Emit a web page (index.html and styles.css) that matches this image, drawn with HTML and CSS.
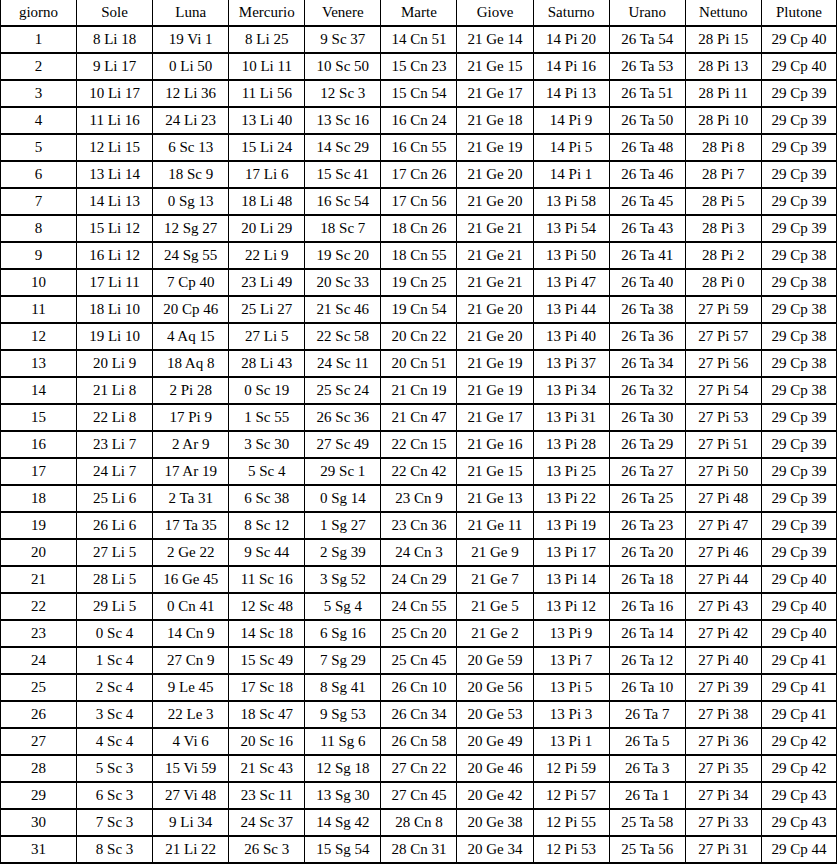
FILE: index.html
```html
<!DOCTYPE html>
<html lang="it">
<head>
<meta charset="utf-8">
<title>Effemeridi</title>
<link rel="stylesheet" href="styles.css">
</head>
<body>
<table class="eph">
<tr><td>giorno</td><td>Sole</td><td>Luna</td><td>Mercurio</td><td>Venere</td><td>Marte</td><td>Giove</td><td>Saturno</td><td>Urano</td><td>Nettuno</td><td>Plutone</td></tr>
<tr><td>1</td><td>8 Li 18</td><td>19 Vi 1</td><td>8 Li 25</td><td>9 Sc 37</td><td>14 Cn 51</td><td>21 Ge 14</td><td>14 Pi 20</td><td>26 Ta 54</td><td>28 Pi 15</td><td>29 Cp 40</td></tr>
<tr><td>2</td><td>9 Li 17</td><td>0 Li 50</td><td>10 Li 11</td><td>10 Sc 50</td><td>15 Cn 23</td><td>21 Ge 15</td><td>14 Pi 16</td><td>26 Ta 53</td><td>28 Pi 13</td><td>29 Cp 40</td></tr>
<tr><td>3</td><td>10 Li 17</td><td>12 Li 36</td><td>11 Li 56</td><td>12 Sc 3</td><td>15 Cn 54</td><td>21 Ge 17</td><td>14 Pi 13</td><td>26 Ta 51</td><td>28 Pi 11</td><td>29 Cp 39</td></tr>
<tr><td>4</td><td>11 Li 16</td><td>24 Li 23</td><td>13 Li 40</td><td>13 Sc 16</td><td>16 Cn 24</td><td>21 Ge 18</td><td>14 Pi 9</td><td>26 Ta 50</td><td>28 Pi 10</td><td>29 Cp 39</td></tr>
<tr><td>5</td><td>12 Li 15</td><td>6 Sc 13</td><td>15 Li 24</td><td>14 Sc 29</td><td>16 Cn 55</td><td>21 Ge 19</td><td>14 Pi 5</td><td>26 Ta 48</td><td>28 Pi 8</td><td>29 Cp 39</td></tr>
<tr><td>6</td><td>13 Li 14</td><td>18 Sc 9</td><td>17 Li 6</td><td>15 Sc 41</td><td>17 Cn 26</td><td>21 Ge 20</td><td>14 Pi 1</td><td>26 Ta 46</td><td>28 Pi 7</td><td>29 Cp 39</td></tr>
<tr><td>7</td><td>14 Li 13</td><td>0 Sg 13</td><td>18 Li 48</td><td>16 Sc 54</td><td>17 Cn 56</td><td>21 Ge 20</td><td>13 Pi 58</td><td>26 Ta 45</td><td>28 Pi 5</td><td>29 Cp 39</td></tr>
<tr><td>8</td><td>15 Li 12</td><td>12 Sg 27</td><td>20 Li 29</td><td>18 Sc 7</td><td>18 Cn 26</td><td>21 Ge 21</td><td>13 Pi 54</td><td>26 Ta 43</td><td>28 Pi 3</td><td>29 Cp 39</td></tr>
<tr><td>9</td><td>16 Li 12</td><td>24 Sg 55</td><td>22 Li 9</td><td>19 Sc 20</td><td>18 Cn 55</td><td>21 Ge 21</td><td>13 Pi 50</td><td>26 Ta 41</td><td>28 Pi 2</td><td>29 Cp 38</td></tr>
<tr><td>10</td><td>17 Li 11</td><td>7 Cp 40</td><td>23 Li 49</td><td>20 Sc 33</td><td>19 Cn 25</td><td>21 Ge 21</td><td>13 Pi 47</td><td>26 Ta 40</td><td>28 Pi 0</td><td>29 Cp 38</td></tr>
<tr><td>11</td><td>18 Li 10</td><td>20 Cp 46</td><td>25 Li 27</td><td>21 Sc 46</td><td>19 Cn 54</td><td>21 Ge 20</td><td>13 Pi 44</td><td>26 Ta 38</td><td>27 Pi 59</td><td>29 Cp 38</td></tr>
<tr><td>12</td><td>19 Li 10</td><td>4 Aq 15</td><td>27 Li 5</td><td>22 Sc 58</td><td>20 Cn 22</td><td>21 Ge 20</td><td>13 Pi 40</td><td>26 Ta 36</td><td>27 Pi 57</td><td>29 Cp 38</td></tr>
<tr><td>13</td><td>20 Li 9</td><td>18 Aq 8</td><td>28 Li 43</td><td>24 Sc 11</td><td>20 Cn 51</td><td>21 Ge 19</td><td>13 Pi 37</td><td>26 Ta 34</td><td>27 Pi 56</td><td>29 Cp 38</td></tr>
<tr><td>14</td><td>21 Li 8</td><td>2 Pi 28</td><td>0 Sc 19</td><td>25 Sc 24</td><td>21 Cn 19</td><td>21 Ge 19</td><td>13 Pi 34</td><td>26 Ta 32</td><td>27 Pi 54</td><td>29 Cp 38</td></tr>
<tr><td>15</td><td>22 Li 8</td><td>17 Pi 9</td><td>1 Sc 55</td><td>26 Sc 36</td><td>21 Cn 47</td><td>21 Ge 17</td><td>13 Pi 31</td><td>26 Ta 30</td><td>27 Pi 53</td><td>29 Cp 39</td></tr>
<tr><td>16</td><td>23 Li 7</td><td>2 Ar 9</td><td>3 Sc 30</td><td>27 Sc 49</td><td>22 Cn 15</td><td>21 Ge 16</td><td>13 Pi 28</td><td>26 Ta 29</td><td>27 Pi 51</td><td>29 Cp 39</td></tr>
<tr><td>17</td><td>24 Li 7</td><td>17 Ar 19</td><td>5 Sc 4</td><td>29 Sc 1</td><td>22 Cn 42</td><td>21 Ge 15</td><td>13 Pi 25</td><td>26 Ta 27</td><td>27 Pi 50</td><td>29 Cp 39</td></tr>
<tr><td>18</td><td>25 Li 6</td><td>2 Ta 31</td><td>6 Sc 38</td><td>0 Sg 14</td><td>23 Cn 9</td><td>21 Ge 13</td><td>13 Pi 22</td><td>26 Ta 25</td><td>27 Pi 48</td><td>29 Cp 39</td></tr>
<tr><td>19</td><td>26 Li 6</td><td>17 Ta 35</td><td>8 Sc 12</td><td>1 Sg 27</td><td>23 Cn 36</td><td>21 Ge 11</td><td>13 Pi 19</td><td>26 Ta 23</td><td>27 Pi 47</td><td>29 Cp 39</td></tr>
<tr><td>20</td><td>27 Li 5</td><td>2 Ge 22</td><td>9 Sc 44</td><td>2 Sg 39</td><td>24 Cn 3</td><td>21 Ge 9</td><td>13 Pi 17</td><td>26 Ta 20</td><td>27 Pi 46</td><td>29 Cp 39</td></tr>
<tr><td>21</td><td>28 Li 5</td><td>16 Ge 45</td><td>11 Sc 16</td><td>3 Sg 52</td><td>24 Cn 29</td><td>21 Ge 7</td><td>13 Pi 14</td><td>26 Ta 18</td><td>27 Pi 44</td><td>29 Cp 40</td></tr>
<tr><td>22</td><td>29 Li 5</td><td>0 Cn 41</td><td>12 Sc 48</td><td>5 Sg 4</td><td>24 Cn 55</td><td>21 Ge 5</td><td>13 Pi 12</td><td>26 Ta 16</td><td>27 Pi 43</td><td>29 Cp 40</td></tr>
<tr><td>23</td><td>0 Sc 4</td><td>14 Cn 9</td><td>14 Sc 18</td><td>6 Sg 16</td><td>25 Cn 20</td><td>21 Ge 2</td><td>13 Pi 9</td><td>26 Ta 14</td><td>27 Pi 42</td><td>29 Cp 40</td></tr>
<tr><td>24</td><td>1 Sc 4</td><td>27 Cn 9</td><td>15 Sc 49</td><td>7 Sg 29</td><td>25 Cn 45</td><td>20 Ge 59</td><td>13 Pi 7</td><td>26 Ta 12</td><td>27 Pi 40</td><td>29 Cp 41</td></tr>
<tr><td>25</td><td>2 Sc 4</td><td>9 Le 45</td><td>17 Sc 18</td><td>8 Sg 41</td><td>26 Cn 10</td><td>20 Ge 56</td><td>13 Pi 5</td><td>26 Ta 10</td><td>27 Pi 39</td><td>29 Cp 41</td></tr>
<tr><td>26</td><td>3 Sc 4</td><td>22 Le 3</td><td>18 Sc 47</td><td>9 Sg 53</td><td>26 Cn 34</td><td>20 Ge 53</td><td>13 Pi 3</td><td>26 Ta 7</td><td>27 Pi 38</td><td>29 Cp 41</td></tr>
<tr><td>27</td><td>4 Sc 4</td><td>4 Vi 6</td><td>20 Sc 16</td><td>11 Sg 6</td><td>26 Cn 58</td><td>20 Ge 49</td><td>13 Pi 1</td><td>26 Ta 5</td><td>27 Pi 36</td><td>29 Cp 42</td></tr>
<tr><td>28</td><td>5 Sc 3</td><td>15 Vi 59</td><td>21 Sc 43</td><td>12 Sg 18</td><td>27 Cn 22</td><td>20 Ge 46</td><td>12 Pi 59</td><td>26 Ta 3</td><td>27 Pi 35</td><td>29 Cp 42</td></tr>
<tr><td>29</td><td>6 Sc 3</td><td>27 Vi 48</td><td>23 Sc 11</td><td>13 Sg 30</td><td>27 Cn 45</td><td>20 Ge 42</td><td>12 Pi 57</td><td>26 Ta 1</td><td>27 Pi 34</td><td>29 Cp 43</td></tr>
<tr><td>30</td><td>7 Sc 3</td><td>9 Li 34</td><td>24 Sc 37</td><td>14 Sg 42</td><td>28 Cn 8</td><td>20 Ge 38</td><td>12 Pi 55</td><td>25 Ta 58</td><td>27 Pi 33</td><td>29 Cp 43</td></tr>
<tr><td>31</td><td>8 Sc 3</td><td>21 Li 22</td><td>26 Sc 3</td><td>15 Sg 54</td><td>28 Cn 31</td><td>20 Ge 34</td><td>12 Pi 53</td><td>25 Ta 56</td><td>27 Pi 31</td><td>29 Cp 44</td></tr>
</table>
</body>
</html>
```
FILE: styles.css
```css
html, body {
  margin: 0;
  padding: 0;
  background: #ffffff;
}

.eph {
  border-collapse: separate;
  border-spacing: 0;
  table-layout: fixed;
  width: 837px;
  font-family: "Liberation Serif", "Times New Roman", serif;
  font-size: 15px;
  color: #000000;
}

.eph td {
  height: 25px;
  padding: 0;
  text-align: center;
  vertical-align: middle;
  white-space: nowrap;
  border-left: 1px solid #000000;
  border-bottom: 2px solid #000000;
  line-height: 25px;
}

.eph td:last-child {
  border-right: 1px solid #000000;
}
```
